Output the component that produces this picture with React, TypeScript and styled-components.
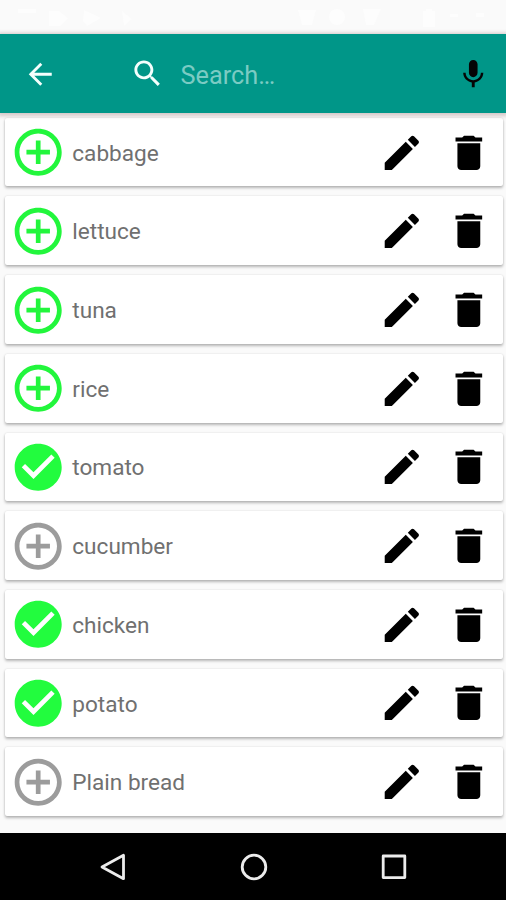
import React from "react";
import styled, { createGlobalStyle } from "styled-components";

const GlobalStyle = createGlobalStyle`
  * { box-sizing: border-box; }
  body { margin: 0; background: #fafafa; font-family: Roboto, "Noto Sans", sans-serif; }
`;

const Screen = styled.div`
  width: 506px;
  height: 900px;
  display: flex;
  flex-direction: column;
  background: #fafafa;
  overflow: hidden;
`;

const StatusBar = styled.div`
  height: 34.4px;
  flex: none;
  display: flex;
  justify-content: space-between;
  padding: 8px 12px 0 16px;
`;

const StatusGroup = styled.svg`
  display: block;
  height: 20px;
  fill: #ffffff;
  opacity: 0.7;
`;

const Toolbar = styled.header`
  height: 78.3px;
  flex: none;
  display: flex;
  align-items: center;
  padding: 0.6px 15.7px 0 22.8px;
  background: #009688;
  box-shadow: 0 1px 4px 2px rgba(90, 40, 40, 0.24);
  z-index: 1;
`;

const Glyph = styled.svg<{ $size: number; $color: string }>`
  display: block;
  flex: none;
  width: ${(p) => p.$size}px;
  height: ${(p) => p.$size}px;
  fill: ${(p) => p.$color};
`;

const SearchField = styled.div`
  flex: 1;
  display: flex;
  align-items: center;
  margin-left: 72.6px;
`;

const Placeholder = styled.span`
  margin-left: 15.6px;
  padding-top: 4px;
  font-size: 25.3px;
  line-height: 30px;
  color: #7bcbc3;
`;

const List = styled.ul`
  flex: 1;
  min-height: 0;
  margin: 0;
  padding: 5.1px 3.4px 0 5px;
  list-style: none;
  display: flex;
  flex-direction: column;
  gap: 10px;
`;

const Card = styled.li`
  height: 68.7px;
  flex: none;
  display: flex;
  align-items: center;
  padding: 0.6px 10.8px 0 5.4px;
  background: #ffffff;
  border-radius: 2px;
  box-shadow: 0 2px 3px rgba(0, 0, 0, 0.27), 0 0 2px rgba(0, 0, 0, 0.13);
`;

const Name = styled.span`
  flex: 1;
  margin-left: 5.5px;
  padding-top: 2.6px;
  font-size: 22.6px;
  line-height: 30px;
  color: #707070;
`;

const Actions = styled.div`
  display: flex;
  gap: 21.6px;
`;

const NavBar = styled.nav`
  height: 66.8px;
  flex: none;
  display: grid;
  grid-template-columns: repeat(3, 140.5px);
  justify-content: center;
  align-items: center;
  padding-left: 1px;
  background: #000000;
`;

const NavIcon = styled.svg`
  display: block;
  justify-self: center;
  width: 30px;
  height: 30px;
  fill: none;
  stroke: #ececec;
  stroke-width: 2.8;
  stroke-linejoin: round;
`;

const paths = {
  back: "M20 11H7.83l5.59-5.59L12 4l-8 8 8 8 1.41-1.41L7.83 13H20v-2z",
  search:
    "M15.5 14h-.79l-.28-.27C15.41 12.59 16 11.11 16 9.5 16 5.91 13.09 3 9.5 3S3 5.91 3 9.5 5.91 16 9.5 16c1.61 0 3.09-.59 4.23-1.57l.27.28v.79l5 4.99L20.49 19l-4.99-5zm-6 0C7.01 14 5 11.99 5 9.5S7.01 5 9.5 5 14 7.01 14 9.5 11.99 14 9.5 14z",
  mic: "M12 14c1.66 0 2.99-1.34 2.99-3L15 5c0-1.66-1.34-3-3-3S9 3.34 9 5v6c0 1.66 1.34 3 3 3zm5.3-3c0 3-2.54 5.1-5.3 5.1S6.7 14 6.7 11H5c0 3.41 2.72 6.23 6 6.72V21h2v-3.28c3.28-.48 6-3.3 6-6.72h-1.7z",
  plus: "M13 7h-2v4H7v2h4v4h2v-4h4v-2h-4V7zm-1-5C6.48 2 2 6.48 2 12s4.48 10 10 10 10-4.48 10-10S17.52 2 12 2zm0 18c-4.41 0-8-3.59-8-8s3.59-8 8-8 8 3.59 8 8-3.59 8-8 8z",
  check:
    "M12 2C6.48 2 2 6.48 2 12s4.48 10 10 10 10-4.48 10-10S17.52 2 12 2zm-2 15l-5-5 1.41-1.41L10 14.17l7.59-7.59L19 8l-9 9z",
  edit: "M3 17.25V21h3.75L17.81 9.94l-3.75-3.75L3 17.25zM20.71 7.04c.39-.39.39-1.02 0-1.41l-2.34-2.34c-.39-.39-1.02-.39-1.41 0l-1.83 1.83 3.75 3.75 1.83-1.83z",
  trash: "M6 19c0 1.1.9 2 2 2h8c1.1 0 2-.9 2-2V7H6v12zM19 4h-3.5l-1-1h-5l-1 1H5v2h14V4z",
};

function Icon({ name, size, color }: { name: keyof typeof paths; size: number; color: string }) {
  return (
    <Glyph viewBox="0 0 24 24" $size={size} $color={color} aria-hidden="true">
      <path d={paths[name]} />
    </Glyph>
  );
}

type Status = "available" | "selected" | "inactive";

const statusIcon: Record<Status, { name: "plus" | "check"; color: string }> = {
  available: { name: "plus", color: "#22f63c" },
  selected: { name: "check", color: "#22fc3e" },
  inactive: { name: "plus", color: "#9c9c9c" },
};

const items: { label: string; status: Status }[] = [
  { label: "cabbage", status: "available" },
  { label: "lettuce", status: "available" },
  { label: "tuna", status: "available" },
  { label: "rice", status: "available" },
  { label: "tomato", status: "selected" },
  { label: "cucumber", status: "inactive" },
  { label: "chicken", status: "selected" },
  { label: "potato", status: "selected" },
  { label: "Plain bread", status: "inactive" },
];

function Ingredient({ label, status }: { label: string; status: Status }) {
  const mark = statusIcon[status];
  return (
    <Card>
      <Icon name={mark.name} size={56.4} color={mark.color} />
      <Name>{label}</Name>
      <Actions>
        <Icon name="edit" size={45.7} color="#000" />
        <Icon name="trash" size={45.7} color="#000" />
      </Actions>
    </Card>
  );
}

export default function App() {
  return (
    <>
      <GlobalStyle />
      <Screen>
        <StatusBar>
          <StatusGroup width="130" viewBox="0 0 130 20">
            <path d="M2 1h18v4H2zM33 3h10l9 7-8 8H33zM68 2l17 8-14 8-4-5zM106 3l10 8-8 7z" />
          </StatusGroup>
          <StatusGroup width="200" viewBox="0 0 200 20">
            <path d="M4 2h18l-4 15H8zM69 1h18l-7 16h-8zM129 3h3V1h6v2h3v16h-12zM156 6h8v3h-8zM182 5h8v4h-8z" />
            <circle cx="43" cy="9" r="8" />
          </StatusGroup>
        </StatusBar>
        <Toolbar>
          <Icon name="back" size={34.5} color="#f4fffd" />
          <SearchField>
            <Icon name="search" size={35} color="#f4fffd" />
            <Placeholder>Search…</Placeholder>
          </SearchField>
          <Icon name="mic" size={34.5} color="#050505" />
        </Toolbar>
        <List>
          {items.map((item) => (
            <Ingredient key={item.label} {...item} />
          ))}
        </List>
        <NavBar>
          <NavIcon viewBox="0 0 30 30">
            <path d="M25.5 3.3v23.4L4 15z" />
          </NavIcon>
          <NavIcon viewBox="0 0 30 30">
            <circle cx="15" cy="15" r="11.8" />
          </NavIcon>
          <NavIcon viewBox="0 0 30 30">
            <rect x="4.2" y="4" width="21.6" height="21.6" />
          </NavIcon>
        </NavBar>
      </Screen>
    </>
  );
}
